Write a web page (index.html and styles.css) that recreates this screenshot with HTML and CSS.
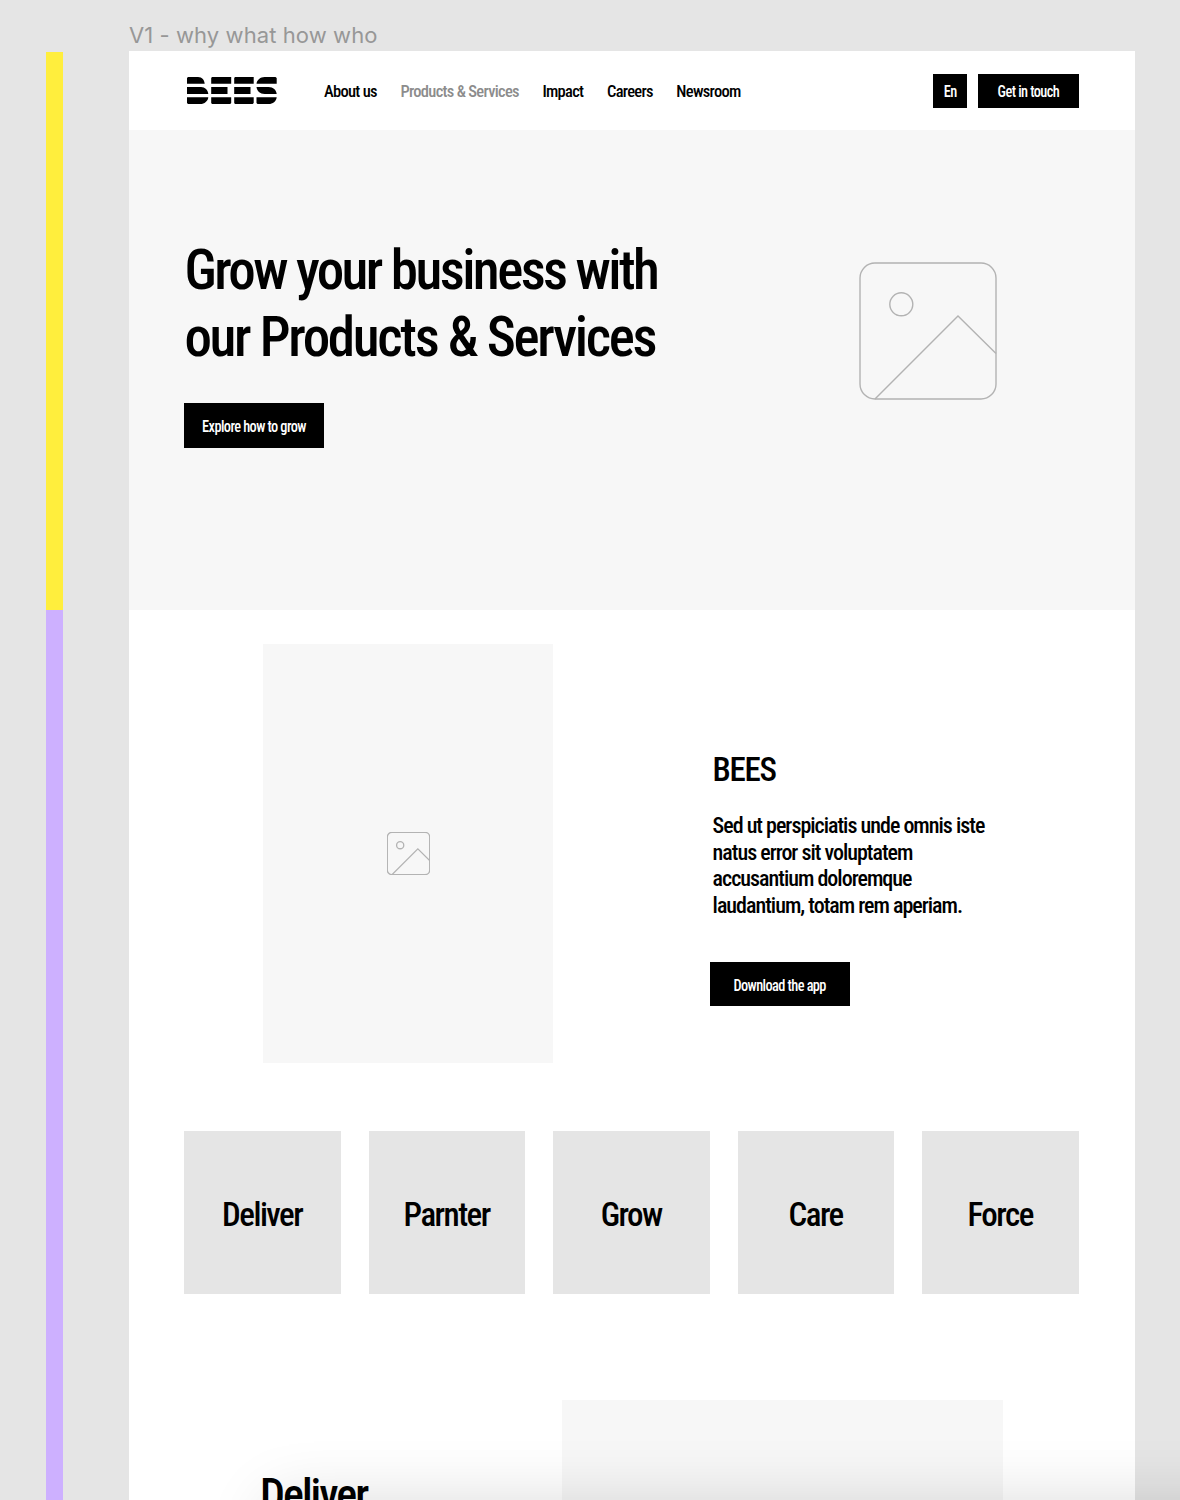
FILE: index.html
```html
<!DOCTYPE html>
<html lang="en">
<head>
<meta charset="utf-8">
<title>BEES – Products &amp; Services</title>
<link rel="stylesheet" href="styles.css">
</head>
<body>
<svg class="defs" aria-hidden="true">
  <symbol id="placeholder" viewBox="0 0 138 138">
    <rect x="1" y="1" width="136" height="136" rx="15"/>
    <circle cx="42.3" cy="42.3" r="11.5"/>
    <path d="M16 137 99 54l38 37.5"/>
  </symbol>
</svg>
<div class="canvas">
  <div class="rail">
    <div class="rail-why"></div>
    <div class="rail-what"></div>
  </div>
  <div class="board">
    <div class="board-label">V1 - why what how who</div>
    <div class="frame">
      <header class="header">
        <svg class="logo" viewBox="0 0 90 27" role="img" aria-label="BEES">
          <path d="M1 0h10c4.200 0 6.500 3 6.700 6.800H0V1zM0 10h14c4 0 7 3 7.300 7H0zM0 20.200h21.300c-.3 3.800-3.800 6.800-8 6.800H1l-1-1z"/>
          <path d="M25 0h19.200v6.800H24.200V1zM24.200 10h16.300v7H24.200zM24.200 20.200h20V26l-1 1H25l-.8-1z"/>
          <path d="M48 0h18.700v6.800H47.200V1zM47.200 10h16.300v7H47.200zM47.200 20.200h19.500V26l-1 1H48l-.8-1z"/>
          <path d="M69.500 6.800c.4-4 4-6.800 8-6.800h11l1.200 1v5.800zM69.500 10h12c4.800 0 7.800 3 8.200 7h-12c-4.800 0-7.700-3-8.200-7zM69.500 20.200h20.200c-.4 4-4 6.800-8 6.800H70.500l-1-1z"/>
        </svg>
        <nav class="nav">
          <a>About us</a>
          <a class="current">Products &amp; Services</a>
          <a>Impact</a>
          <a>Careers</a>
          <a>Newsroom</a>
        </nav>
        <div class="actions">
          <a class="btn lang"><span>En</span></a>
          <a class="btn contact"><span>Get in touch</span></a>
        </div>
      </header>
      <section class="hero">
        <div class="hero-copy">
          <h1>Grow your business with<br><span class="looser">our Products &amp; Services</span></h1>
          <a class="btn large"><span>Explore how to grow</span></a>
        </div>
        <svg class="hero-image"><use href="#placeholder"/></svg>
      </section>
      <section class="intro">
        <div class="intro-image"><svg><use href="#placeholder"/></svg></div>
        <div class="intro-copy">
          <h2>BEES</h2>
          <p>Sed ut perspiciatis unde omnis iste<br>natus error sit voluptatem<br>accusantium doloremque<br>laudantium, totam rem aperiam.</p>
          <a class="btn large"><span>Download the app</span></a>
        </div>
      </section>
      <section class="cards">
        <div class="card"><span>Deliver</span></div>
        <div class="card"><span>Parnter</span></div>
        <div class="card"><span>Grow</span></div>
        <div class="card"><span>Care</span></div>
        <div class="card"><span>Force</span></div>
      </section>
      <section class="feature">
        <h2>Deliver</h2>
        <div class="feature-image"></div>
      </section>
    </div>
  </div>
  <div class="toolbar-shadow"></div>
</div>
</body>
</html>
```

FILE: styles.css
```css
* { box-sizing: border-box; }

body {
  margin: 0;
  background: #e5e5e5;
  color: #000;
  font-family: "Roboto Condensed", Roboto, sans-serif;
  font-weight: 530;
}

h1, h2, p { margin: 0; font-weight: 530; white-space: nowrap; }

.defs { display: block; width: 0; height: 0; }

.canvas {
  position: relative;
  display: flex;
  width: 1180px;
  height: 1500px;
  overflow: hidden;
}

.rail {
  display: flex;
  flex-direction: column;
  width: 17px;
  margin: 52px 66px 0 46px;
}
.rail-why { height: 558px; background: #ffee3d; }
.rail-what { flex: 1; background: #cdb0ff; }

.board { width: 1006px; }
.board-label {
  height: 51.4px;
  padding-top: 21px;
  color: #979797;
  font: 400 22px/28px Inter, sans-serif;
  letter-spacing: 0.08px;
  white-space: nowrap;
}
.frame { height: 1460px; background: #fff; }

.header {
  display: flex;
  align-items: center;
  height: 78.6px;
  padding: 0 56px 0 58px;
}
.logo { width: 90px; height: 27px; }
.nav {
  display: flex;
  gap: 23.6px;
  margin-left: 47px;
  padding-top: 1px;
  font-size: 16.5px;
  letter-spacing: -0.043em;
  white-space: nowrap;
}
.nav .current { color: #8c8c8c; }
.actions { display: flex; gap: 11px; margin-left: auto; }

.btn {
  display: flex;
  justify-content: center;
  align-items: center;
  height: 34px;
  padding-top: 2px;
  background: #000;
  color: #fff;
  font-size: 16px;
  letter-spacing: -0.04em;
  white-space: nowrap;
}
.btn span { transform: scaleX(0.895); }
.lang { width: 34px; }
.contact { width: 101px; }
.large { width: 140px; height: 44.5px; }

.hero {
  display: flex;
  justify-content: space-between;
  height: 480px;
  padding: 107px 138px 0 55.4px;
  background: #f7f7f7;
}
.hero h1 {
  margin-bottom: 32.4px;
  font-size: 55px;
  line-height: 67px;
  letter-spacing: -0.047em;
}
.hero h1 .looser { letter-spacing: -0.042em; }
.hero-image, .intro-image svg {
  fill: none;
  stroke: #b3b3b3;
}
.hero-image { width: 138px; height: 138px; margin-top: 25px; stroke-width: 1.4; }

.intro { display: flex; padding: 34px 0 0 134px; }
.intro-image {
  display: flex;
  justify-content: center;
  align-items: center;
  width: 290px;
  height: 419px;
  background: #f7f7f7;
}
.intro-image svg { width: 43px; height: 43px; stroke-width: 4.2; }
.intro-copy { margin-left: 157px; padding-top: 106px; }
.intro-copy h2 {
  margin: 0 0 23.3px 2.6px;
  font-size: 33px;
  line-height: 40px;
  letter-spacing: -0.04em;
  font-weight: 500;
}
.intro-copy p {
  margin: 0 0 42.7px 2.6px;
  font-size: 22px;
  line-height: 26.5px;
  letter-spacing: -0.0455em;
}

.cards {
  display: grid;
  grid-template-columns: repeat(5, 1fr);
  gap: 27.9px;
  padding: 68px 56.1px 0 55.4px;
}
.card {
  display: flex;
  justify-content: center;
  align-items: center;
  height: 163px;
  padding: 4px 1px 0 0;
  background: #e5e5e5;
  font-size: 33px;
  letter-spacing: -0.046em;
}

.feature {
  display: flex;
  justify-content: space-between;
  padding: 106px 132px 0 131px;
}
.feature h2 {
  padding-top: 69px;
  font-size: 44px;
  line-height: 52px;
  letter-spacing: -0.045em;
}
.feature-image { width: 441px; height: 300px; background: #f7f7f7; }

/* Soft shadow cast upward by the panel docked below the canvas */
.toolbar-shadow {
  position: absolute;
  top: 1500px;
  left: 270px;
  width: 1100px;
  height: 200px;
  box-shadow: 0 0 60px rgba(0, 0, 0, 0.14);
}
```
